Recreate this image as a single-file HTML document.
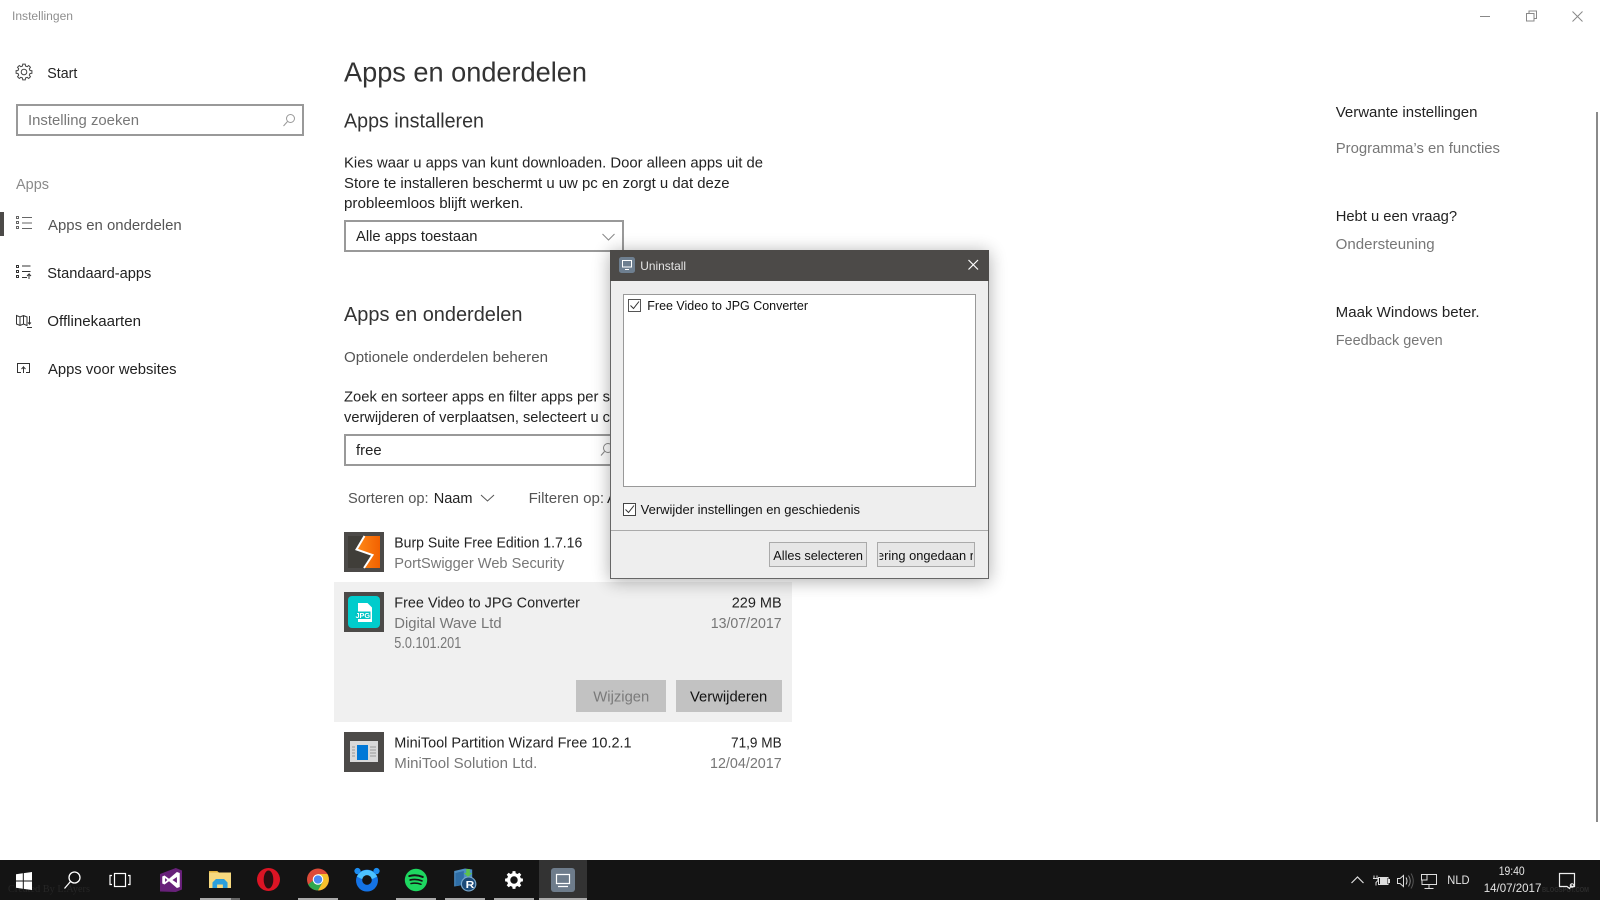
<!DOCTYPE html>
<html lang="nl">
<head>
<meta charset="utf-8">
<title>Instellingen</title>
<style>
html,body{margin:0;padding:0;background:#fff;width:1600px;height:900px;overflow:hidden}
svg{display:block;position:absolute;left:0;top:0}
text{font-family:"Liberation Sans",sans-serif;font-size:15px;fill:#222}
.g{fill:#777}
.s{fill:#555}
.d{font-size:12.5px;fill:#111}
.t{font-size:12px;fill:#e4e4e4}
</style>
</head>
<body>
<svg width="1600" height="900" viewBox="0 0 1600 900" xmlns="http://www.w3.org/2000/svg">
<defs>
<linearGradient id="org" x1="0" x2="1"><stop offset="0" stop-color="#ff8a1a"/><stop offset="1" stop-color="#f26100"/></linearGradient>
<filter id="sh" x="-15%" y="-15%" width="130%" height="130%"><feGaussianBlur stdDeviation="9"/></filter>
<clipPath id="btn2"><rect x="879.500" y="543" width="93.500" height="22"/></clipPath>
</defs>
<rect width="1600" height="900" fill="#fff"/>

<!-- title bar -->
<text x="12" y="20" style="font-size:11.5px;fill:#8f8f8f" textLength="61" lengthAdjust="spacingAndGlyphs">Instellingen</text>
<path d="M1480 16.5h10" stroke="#888" fill="none"/>
<path d="M1526.5 13.5h7.5v7.5h-7.5zM1529 13.5v-2.500h7.500v7.500h-2.500" stroke="#888" fill="none"/>
<path d="M1572.5 11.5l10 10M1582.5 11.5l-10 10" stroke="#888" fill="none"/>

<!-- sidebar -->
<g transform="translate(24,72)" fill="none" stroke="#444" stroke-width="1">
<path d="M6.02-1.5L7.9-1.25 7.9 1.25 6.02 1.5 5.31 3.19 6.47 4.7 4.7 6.47 3.19 5.31 1.5 6.02 1.25 7.9-1.25 7.9-1.5 6.02-3.19 5.31-4.7 6.47-6.47 4.7-5.31 3.19-6.02 1.5-7.9 1.25-7.9-1.25-6.02-1.5-5.31-3.19-6.47-4.7-4.7-6.47-3.19-5.31-1.5-6.02-1.25-7.9 1.25-7.9 1.5-6.02 3.19-5.31 4.7-6.47 6.47-4.7 5.31-3.19z"/>
<circle r="2.8"/>
</g>
<text x="47.3" y="78" textLength="30" lengthAdjust="spacingAndGlyphs">Start</text>
<rect x="17" y="105" width="286" height="30" fill="#fff" stroke="#999" stroke-width="2"/>
<text x="28" y="125" class="g" textLength="111" lengthAdjust="spacingAndGlyphs">Instelling zoeken</text>
<g fill="none" stroke="#999"><circle cx="290.5" cy="118.500" r="4"/><path d="M287.500 121.500l-4 4.500"/></g>
<text x="16" y="189" style="fill:#8a8a8a" textLength="33" lengthAdjust="spacingAndGlyphs">Apps</text>
<rect x="0" y="212" width="4" height="24" fill="#4c4a48"/>
<g fill="none" stroke="#666">
<path d="M16.500 216.500h2v2h-2zM16.500 221.500h2v2h-2zM16.500 226.500h2v2h-2zM22 217.500h10M22 223h10M22 228.500h10"/>
</g>
<text x="48" y="230" class="s" textLength="133.700" lengthAdjust="spacingAndGlyphs">Apps en onderdelen</text>
<g fill="none" stroke="#333">
<path d="M16.500 265.500h2v2h-2zM16.500 270.500h2v2h-2zM16.500 275.500h2v2h-2zM22 266h8.500M22 271.500h8.500M22 277.500h5M29 279v-5l-2 2M29 274l2 2"/>
</g>
<text x="47.3" y="278" textLength="104" lengthAdjust="spacingAndGlyphs">Standaard-apps</text>
<g fill="none" stroke="#333">
<path d="M16.500 315.500l3.500 1.500 3.500-1.500 3.500 1.500v8.500l-3.500-1.500-3.500 1.500-3.500-1.500zM20 317v8.500M23.500 315.500v8.500M29.500 316v8l-1.500-1.500M29.500 324l1.500-1.500M27 327.500h5"/>
</g>
<text x="47.3" y="326" textLength="93.700" lengthAdjust="spacingAndGlyphs">Offlinekaarten</text>
<g fill="none" stroke="#333">
<path d="M21 372.500h-3.500v-9h12v9h-3.500M23.500 373v-6l-2 2M23.500 367l2 2"/>
</g>
<text x="48" y="374" textLength="128.500" lengthAdjust="spacingAndGlyphs">Apps voor websites</text>

<!-- main column -->
<text x="344" y="81.500" style="font-size:28px;fill:#333" textLength="243" lengthAdjust="spacingAndGlyphs">Apps en onderdelen</text>
<text x="344" y="127.300" style="font-size:20px;fill:#333" textLength="140" lengthAdjust="spacingAndGlyphs">Apps installeren</text>
<text x="344" y="167.500" textLength="419" lengthAdjust="spacingAndGlyphs">Kies waar u apps van kunt downloaden. Door alleen apps uit de</text>
<text x="344" y="188" textLength="385.600" lengthAdjust="spacingAndGlyphs">Store te installeren beschermt u uw pc en zorgt u dat deze</text>
<text x="344" y="208" textLength="179.500" lengthAdjust="spacingAndGlyphs">probleemloos blijft werken.</text>
<rect x="345" y="221" width="278" height="30" fill="#fff" stroke="#999" stroke-width="2"/>
<text x="356" y="241" textLength="121.500" lengthAdjust="spacingAndGlyphs">Alle apps toestaan</text>
<path d="M602.500 234l6 6 6-6" fill="none" stroke="#888"/>

<text x="344" y="321" style="font-size:20px;fill:#333" textLength="178.500" lengthAdjust="spacingAndGlyphs">Apps en onderdelen</text>
<text x="344" y="362" class="s" textLength="204" lengthAdjust="spacingAndGlyphs">Optionele onderdelen beheren</text>
<text x="344" y="401.700" textLength="266" lengthAdjust="spacingAndGlyphs">Zoek en sorteer apps en filter apps per s</text>
<text x="344" y="422" textLength="266" lengthAdjust="spacingAndGlyphs">verwijderen of verplaatsen, selecteert u c</text>
<rect x="345" y="435" width="278" height="30" fill="#fff" stroke="#999" stroke-width="2"/>
<text x="356" y="455" textLength="25.600" lengthAdjust="spacingAndGlyphs">free</text>
<g fill="none" stroke="#888"><circle cx="608" cy="448" r="4.500"/><path d="M604.500 451.500l-3.500 4"/></g>
<text x="348" y="503" class="s" textLength="80.600" lengthAdjust="spacingAndGlyphs">Sorteren op:</text>
<text x="433.700" y="503" textLength="38.800" lengthAdjust="spacingAndGlyphs">Naam</text>
<path d="M481 495l6.500 6 6.500-6" fill="none" stroke="#555"/>
<text x="528.600" y="503" class="s" textLength="75.500" lengthAdjust="spacingAndGlyphs">Filteren op:</text>
<text x="607" y="503">A</text>

<!-- app: burp -->
<rect x="344" y="532" width="40" height="40" fill="#4c4a48"/>
<rect x="348" y="536" width="32" height="32" fill="#403e39"/>
<path d="M364.500 536H380v32h-16l8.500-13.500-16-5.500z" fill="url(#org)"/>
<path d="M364.500 536l-8 13.500 16 5.500-8.500 13" fill="none" stroke="#fff" stroke-width="2"/>
<text x="394.300" y="547.500" textLength="188" lengthAdjust="spacingAndGlyphs">Burp Suite Free Edition 1.7.16</text>
<text x="394.300" y="568" class="g" textLength="170" lengthAdjust="spacingAndGlyphs">PortSwigger Web Security</text>

<!-- app: selected -->
<rect x="334" y="582" width="458" height="140" fill="#f0f0f0"/>
<rect x="344" y="592" width="40" height="40" fill="#4c4a48"/>
<rect x="348" y="596" width="32" height="32" rx="4" fill="#00cccc"/>
<path d="M358 603h9.500l4.500 4.500v14.500h-14z" fill="#fff"/>
<rect x="355" y="611.500" width="15.500" height="7.500" fill="#00c4c4"/>
<text x="355.500" y="618" style="font-size:7.500px;font-weight:bold;fill:#fff" textLength="14.500" lengthAdjust="spacingAndGlyphs">JPG</text>
<text x="394.300" y="607.500" textLength="185.700" lengthAdjust="spacingAndGlyphs">Free Video to JPG Converter</text>
<text x="394.300" y="628" class="g" textLength="107.300" lengthAdjust="spacingAndGlyphs">Digital Wave Ltd</text>
<text x="394.300" y="648" class="g" style="font-size:15.500px" textLength="67" lengthAdjust="spacingAndGlyphs">5.0.101.201</text>
<text x="731.700" y="607.500" textLength="50" lengthAdjust="spacingAndGlyphs">229 MB</text>
<text x="710.700" y="628" class="g" textLength="71" lengthAdjust="spacingAndGlyphs">13/07/2017</text>
<rect x="576" y="680" width="90" height="32" fill="#c2c2c2"/>
<rect x="676" y="680" width="106" height="32" fill="#c2c2c2"/>
<text x="593.300" y="701.500" style="fill:#7a7a7a" textLength="56" lengthAdjust="spacingAndGlyphs">Wijzigen</text>
<text x="690" y="701.500" style="fill:#111" textLength="77.300" lengthAdjust="spacingAndGlyphs">Verwijderen</text>

<!-- app: minitool -->
<rect x="344" y="732" width="40" height="40" fill="#4c4a48"/>
<rect x="350" y="741" width="28" height="21" fill="#d9d9d9"/>
<rect x="357" y="745" width="11" height="15" fill="#0078d7"/>
<path d="M352 747h3M352 750h3M352 753h3M352 756h3M370 747h6M370 750h6M370 753h6M370 756h6" stroke="#999"/>
<text x="394.300" y="747.500" textLength="237.300" lengthAdjust="spacingAndGlyphs">MiniTool Partition Wizard Free 10.2.1</text>
<text x="394.300" y="768" class="g" textLength="143" lengthAdjust="spacingAndGlyphs">MiniTool Solution Ltd.</text>
<text x="731" y="747.500" textLength="50.700" lengthAdjust="spacingAndGlyphs">71,9 MB</text>
<text x="710" y="768" class="g" textLength="71.700" lengthAdjust="spacingAndGlyphs">12/04/2017</text>

<!-- right column -->
<text x="1335.700" y="117" textLength="141.800" lengthAdjust="spacingAndGlyphs">Verwante instellingen</text>
<text x="1335.700" y="153" class="g" textLength="164.300" lengthAdjust="spacingAndGlyphs">Programma’s en functies</text>
<text x="1335.700" y="221" textLength="121.400" lengthAdjust="spacingAndGlyphs">Hebt u een vraag?</text>
<text x="1335.700" y="249" class="g" textLength="98.900" lengthAdjust="spacingAndGlyphs">Ondersteuning</text>
<text x="1335.700" y="317" textLength="143.900" lengthAdjust="spacingAndGlyphs">Maak Windows beter.</text>
<text x="1335.700" y="345" class="g" textLength="107" lengthAdjust="spacingAndGlyphs">Feedback geven</text>
<rect x="1596" y="112" width="2" height="710" fill="#8a8a8a"/>

<!-- dialog -->
<rect x="610" y="252" width="379" height="329" fill="#000" opacity=".32" filter="url(#sh)"/>
<rect x="610.500" y="250.500" width="378" height="328" fill="#eeeeee" stroke="#666"/>
<rect x="610" y="250" width="379" height="31" fill="#4c4a48"/>
<rect x="619" y="257" width="16" height="16" rx="2.500" fill="#6e7f90"/>
<path d="M622.500 260.500h9v6.500h-9zM625 269.500h4" fill="none" stroke="#fff"/>
<text x="640.300" y="270" class="t" textLength="45.700" lengthAdjust="spacingAndGlyphs">Uninstall</text>
<path d="M968.500 260l9.500 9.500M978 260l-9.500 9.500" stroke="#fff" stroke-width="1.200" fill="none"/>
<rect x="623.500" y="294.500" width="352" height="192" fill="#fff" stroke="#999"/>
<rect x="628.500" y="299.500" width="12" height="12" fill="#fff" stroke="#555"/>
<path d="M630.500 305.500l3 3 5.500-7" fill="none" stroke="#333"/>
<text x="647.300" y="310" class="d" textLength="160.700" lengthAdjust="spacingAndGlyphs">Free Video to JPG Converter</text>
<rect x="623.500" y="503.500" width="12" height="12" fill="#fff" stroke="#444"/>
<path d="M625.500 509.500l3 3 5.500-7" fill="none" stroke="#333"/>
<text x="640.700" y="514" class="d" textLength="219.300" lengthAdjust="spacingAndGlyphs">Verwijder instellingen en geschiedenis</text>
<path d="M611 530.500h377" stroke="#aaa"/>
<rect x="769.500" y="542.500" width="97" height="24" fill="#e6e6e6" stroke="#aaa"/>
<rect x="877.500" y="542.500" width="97" height="24" fill="#e6e6e6" stroke="#aaa"/>
<text x="773.300" y="560" class="d" textLength="89.700" lengthAdjust="spacingAndGlyphs">Alles selecteren</text>
<g clip-path="url(#btn2)"><text x="877" y="560" class="d" textLength="97" lengthAdjust="spacingAndGlyphs">ering ongedaan r</text></g>

<!-- taskbar -->
<rect x="0" y="860" width="1600" height="40" fill="#141414"/>
<text x="8" y="892" style="font-family:'Liberation Serif',serif;font-size:10px;fill:#262626" textLength="82" lengthAdjust="spacingAndGlyphs">Created By L.Ayers</text>
<text x="1542" y="892" style="font-size:7px;font-weight:bold;fill:#2c2c2c" textLength="47" lengthAdjust="spacingAndGlyphs">BLOGSPOT.COM</text>
<path d="M16 874.300l6.800-1v7.200H16zM23.800 873.100l8.200-1.100v8.500h-8.200zM16 881.500h6.800v7.200l-6.800-1zM23.800 881.500H32v8.500l-8.200-1.100z" fill="#fff"/>
<g fill="none" stroke="#fff" stroke-width="1.300"><circle cx="74.500" cy="877.500" r="5.500"/><path d="M70.500 881.500l-6 7"/></g>
<g fill="none" stroke="#fff" stroke-width="1.200"><rect x="114.500" y="873.500" width="11" height="13"/><path d="M112 875.500h-2v9h2M128 875.500h2v9h-2"/></g>

<!-- VS -->
<g transform="translate(160,0) scale(1.128,1) translate(-139,0)">
<path d="M139 874l14-6 5.500 2.500v19l-5.500 2.500-14-.5z" fill="#68217a"/>
<path d="M141 876.500l2-1 4 3.200 7-6.700 2.500 1v14l-2.500 1-7-6.700-4 3.200-2-1zM143.500 878v4l2-2zM150 880l4 3v-6z" fill="#fff" fill-rule="evenodd"/>
</g>
<!-- Explorer -->
<g transform="translate(209,-1) scale(1.158,1) translate(-182,0)">
<path d="M182 872h7l1.500 1.500H201v15.500h-19z" fill="#f6d97f"/>
<path d="M182 872h7l1.500 1.500H182z" fill="#e2b23c"/>
<path d="M185 883.500l3-3.500h7l3 3.500v5.500h-4v-3.500h-5v3.500h-4z" fill="#2a9fdc"/>
</g>
<!-- Opera -->
<ellipse cx="268.500" cy="879.500" rx="11.500" ry="11.500" fill="#dc1424"/>
<ellipse cx="268.500" cy="879.500" rx="4.800" ry="9" fill="#2a0f12"/>
<!-- Chrome -->
<g transform="translate(318,879.500) scale(1.1) translate(-277,-880)">
<circle cx="277" cy="880" r="10" fill="#dd4b39"/>
<path d="M268 884.500a10 10 0 0 0 9 5.500l4.500-8-9-1z" fill="#2fa84f"/>
<path d="M277 890a10 10 0 0 0 8.500-15l-9 0 5 7z" fill="#f6c02c"/>
<circle cx="277" cy="880" r="4.800" fill="#fff"/>
<circle cx="277" cy="880" r="3.800" fill="#4a8af4"/>
</g>
<!-- Blue ring -->
<g transform="translate(367,880) scale(1.12) translate(-320,-880)">
<circle cx="311.500" cy="872" r="2.800" fill="#1b8cf0"/>
<circle cx="328.500" cy="872" r="2.800" fill="#1b8cf0"/>
<circle cx="320" cy="880.500" r="9.800" fill="#1473e6"/>
<path d="M311 877a9.800 9.800 0 0 1 18 0l-4 2h-10z" fill="#4cc2ff"/>
<circle cx="320" cy="880" r="4.300" fill="#141414"/>
</g>
<!-- Spotify -->
<g transform="translate(416,880) scale(1.12) translate(-362,-880)">
<circle cx="362" cy="880" r="10" fill="#1ed760"/>
<g fill="none" stroke="#141414" stroke-linecap="round"><path d="M356 876.500q6-1.800 12 .8" stroke-width="1.800"/><path d="M356.800 880q5.500-1.300 10.500 .8" stroke-width="1.500"/><path d="M357.500 883.200q4.500-1 9 .6" stroke-width="1.300"/></g>
</g>
<!-- R -->
<g transform="translate(465,880) scale(1.2,1) translate(-405,-880)">
<path d="M396 871l9-2.500 6 1v14l-15 3z" fill="#4d8fc4"/>
<path d="M397 873l7-2v14l-7 1z" fill="#2f6ea6"/>
<path d="M406 869h3v4h2l-3.500 4-3.500-4h2z" fill="#5cc24a"/>
<ellipse cx="408" cy="884" rx="6" ry="7" fill="#1c4a78" stroke="#7aa8cc"/>
<text x="405.500" y="888" style="font-size:10px;font-weight:bold;fill:#fff">R</text>
</g>
<!-- Gear -->
<g transform="translate(514,880) scale(1.13)">
<path fill="#fff" d="M6.02-1.5L7.9-1.25 7.9 1.25 6.02 1.5 5.31 3.19 6.47 4.7 4.7 6.47 3.19 5.31 1.5 6.02 1.25 7.9-1.25 7.9-1.5 6.02-3.19 5.31-4.7 6.47-6.47 4.7-5.31 3.19-6.02 1.5-7.9 1.25-7.9-1.25-6.02-1.5-5.31-3.19-6.47-4.7-4.7-6.47-3.19-5.31-1.5-6.02-1.25-7.9 1.25-7.9 1.5-6.02 3.19-5.31 4.7-6.47 6.47-4.7 5.31-3.19z"/>
<circle r="3.300" fill="#141414"/>
</g>
<!-- Current -->
<rect x="539" y="860" width="48" height="40" fill="#333"/>
<rect x="551" y="868" width="24" height="24" rx="3" fill="#6e7c8b"/>
<path d="M556.500 874.500h13v9h-13zM558 886.500h10" fill="none" stroke="#fff" stroke-width="1.200"/>
<!-- underlines -->
<g fill="#aaa">
<rect x="200" y="898" width="31" height="2"/>
<rect x="231" y="898" width="9" height="2" fill="#666"/>
<rect x="298" y="898" width="40" height="2"/>
<rect x="396" y="898" width="40" height="2"/>
<rect x="445" y="898" width="40" height="2"/>
<rect x="494" y="898" width="40" height="2"/>
<rect x="539" y="898" width="48" height="2"/>
</g>

<!-- tray -->
<path d="M1351.500 883l6-6 6 6" fill="none" stroke="#ddd" stroke-width="1.200"/>
<g fill="none" stroke="#ddd"><path d="M1374 875.500v3M1377 875.500v3M1373 878.500h5v2l-2 2v3"/><rect x="1378.500" y="877.500" width="9.500" height="7"/></g>
<rect x="1380" y="878" width="7" height="6" fill="#ddd"/>
<rect x="1388.500" y="879" width="1.500" height="4" fill="#ddd"/>
<path d="M1397.500 878.500h2.500l3.500-3v11l-3.500-3h-2.500z" fill="none" stroke="#ddd"/>
<path d="M1406 877.500q2 3.500 0 7" fill="none" stroke="#ddd"/>
<path d="M1408.500 875.500q3.500 5.500 0 11" fill="none" stroke="#888"/>
<path d="M1411 873.500q4.500 7.500 0 15" fill="none" stroke="#555"/>
<g fill="none" stroke="#ddd"><path d="M1426.500 874.500h10v10h-14.500v-4M1429 884.500v3.500M1424.500 888.500h9"/><rect x="1421.500" y="874.500" width="5.500" height="5.500"/></g>
<text x="1447.300" y="884" class="t" textLength="22.300" lengthAdjust="spacingAndGlyphs">NLD</text>
<text x="1498.700" y="875" class="t" textLength="26" lengthAdjust="spacingAndGlyphs">19:40</text>
<text x="1483.700" y="892" class="t" textLength="57.700" lengthAdjust="spacingAndGlyphs">14/07/2017</text>
<path d="M1559.500 873.500h15v13h-3.500v-.5l-1.500 2.500-2.500-2h-7.500z" fill="none" stroke="#eee" stroke-width="1.200"/>
<circle cx="1572" cy="885.500" r="1.800" fill="none" stroke="#eee"/>
</svg>
</body>
</html>
